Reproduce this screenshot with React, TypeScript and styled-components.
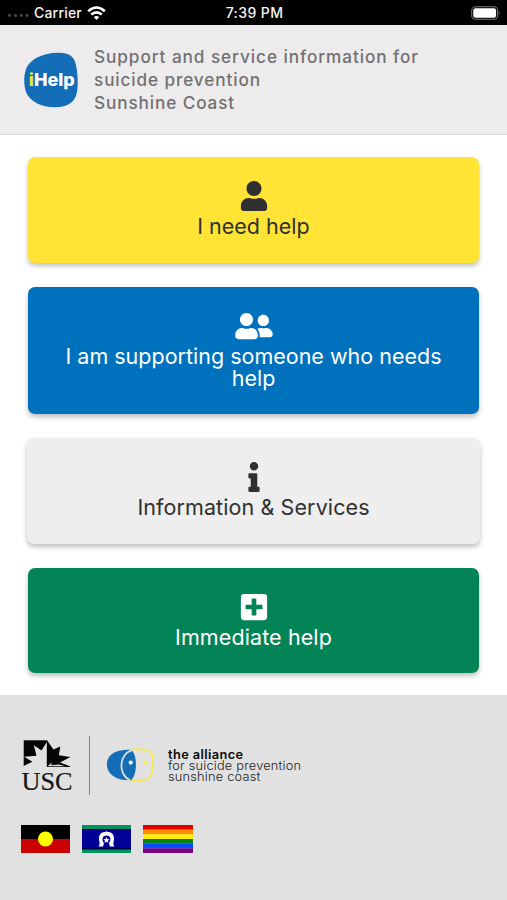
import React from "react";
import styled, { createGlobalStyle } from "styled-components";
import { FaUser, FaUserFriends, FaInfo, FaPlusSquare } from "react-icons/fa";

const GlobalStyle = createGlobalStyle`
  * { box-sizing: border-box; }
  body { margin: 0; background: #fff; font-family: Inter, sans-serif; }
`;

const Screen = styled.div`
  width: 507px;
  height: 900px;
  display: flex;
  flex-direction: column;
  overflow: hidden;
`;

const StatusBar = styled.div`
  height: 25px;
  flex: none;
  background: #000;
  color: #f4f4f4;
  display: grid;
  grid-template-columns: 1fr auto 1fr;
  align-items: center;
  padding: 1px 6px 0 8px;
  font: 500 14px/24px Inter, sans-serif;
`;

const Carrier = styled.div`
  display: flex;
  align-items: center;
  gap: 5px;
`;

const BatteryBox = styled.div`
  display: flex;
  justify-content: flex-end;
`;

const Header = styled.header`
  height: 110px;
  flex: none;
  background: #edebec;
  border-bottom: 1px solid #dcdbdc;
  display: flex;
  align-items: flex-start;
  padding: 20px 0 0 24px;
`;

const Logo = styled.svg`
  margin-top: 7px;
  flex: none;
`;

const Tagline = styled.div`
  margin-left: 15px;
  color: #727172;
  font-size: 17.2px;
  font-weight: 450;
  line-height: 23px;
`;

const Line = styled.div<{ $spacing: number }>`
  letter-spacing: ${(p) => p.$spacing}px;
  white-space: nowrap;
`;

const Menu = styled.main`
  flex: none;
  height: 560px;
  padding: 22px 28px 0;
  display: flex;
  flex-direction: column;
`;

const Card = styled.button<{ $bg: string; $fg: string; $height: number; $gap: number; $wide?: boolean }>`
  border: 0;
  border-radius: 7px;
  background: ${(p) => p.$bg};
  color: ${(p) => p.$fg};
  height: ${(p) => p.$height}px;
  flex: none;
  margin: 0 ${(p) => (p.$wide ? -1 : 0)}px ${(p) => p.$gap}px;
  padding: 24px 0 0;
  display: flex;
  flex-direction: column;
  align-items: center;
  font: 400 21.5px/22px Inter, sans-serif;
  box-shadow: 0 3px 5px rgba(0, 0, 0, 0.25);
  svg { height: 30px; width: 38px; display: block; margin-bottom: 4px; flex: none; }
`;

const Footer = styled.footer`
  flex: 1;
  background: #e1e1e1;
  padding: 41px 21px 0;
`;

const Partners = styled.div`
  display: flex;
  height: 59px;
`;

const Divider = styled.div`
  width: 1px;
  height: 59px;
  background: #858585;
  margin: 0 16px;
`;

const AllianceMark = styled.svg`
  margin-top: 11px;
`;

const AllianceText = styled.div`
  margin: 13px 0 0 14px;
  font: 300 12.8px/11px Inter, sans-serif;
  color: #222;
`;

const AllianceName = styled(Line)`
  font-weight: 600;
  color: #0a0a0a;
`;

const Flags = styled.div`
  display: flex;
  gap: 12px;
  margin-top: 30px;
`;

const rainbow = ["#e50000", "#ff8d00", "#ffee00", "#028121", "#064cff", "#770088"];

export default function App() {
  return (
    <Screen>
      <GlobalStyle />
      <StatusBar>
        <Carrier>
          <svg width="21" height="8" viewBox="0 0 21 8" fill="#4c4c4c">
            {[1.5, 7.5, 13.3, 19].map((x) => <circle key={x} cx={x} cy="6.5" r="1.4" />)}
          </svg>
          <Line as="span" $spacing={0.2}>Carrier</Line>
          <svg width="19" height="15" viewBox="0 0 19 15" fill="none" stroke="#fff" strokeWidth="2.6">
            <path d="M1.2 5.2 Q9.5 -2.2 17.8 5.2" />
            <path d="M4.2 8.6 Q9.5 4 14.8 8.6" />
            <path d="M6.7 11.1 Q9.5 8.8 12.3 11.1 L9.5 14 Z" fill="#fff" stroke="none" />
          </svg>
        </Carrier>
        <Line $spacing={0.4}>7:39 PM</Line>
        <BatteryBox>
          <svg width="30" height="14" viewBox="0 0 30 14">
            <rect x=".7" y=".7" width="26" height="12.6" rx="3.8" fill="none" stroke="#777" strokeWidth="1.1" />
            <rect x="2.3" y="2.2" width="22.8" height="9.6" rx="2.3" fill="#fff" />
            <path d="M28 5 Q29.5 7 28 9Z" fill="#777" />
          </svg>
        </BatteryBox>
      </StatusBar>

      <Header>
        <Logo width="55" height="56" viewBox="0 0 55 56">
          <path d="M33 .8 C45 .2 50 4 52 13 C54 22 54.2 34 52.8 41 C50.5 51 43 55 32 55.2 C18 55.5 6 50 2 40 C-1 31 -.2 18 5 12 C11 5 21 1.2 33 .8Z" fill="#136db7" />
          <text x="4.8" y="34" fontFamily="Inter, sans-serif" fontWeight="800" fontSize="17" fill="#fff" textLength="46" lengthAdjust="spacingAndGlyphs">
            <tspan fill="#e8e82e">i</tspan>Help
          </text>
        </Logo>
        <Tagline>
          <Line $spacing={0.93}>Support and service information for</Line>
          <Line $spacing={0.88}>suicide prevention</Line>
          <Line $spacing={0.88}>Sunshine Coast</Line>
        </Tagline>
      </Header>

      <Menu>
        <Card $bg="#ffe436" $fg="#303030" $height={106} $gap={24}>
          <FaUser />
          <Line $spacing={0}>I need help</Line>
        </Card>
        <Card $bg="#0071bd" $fg="#fff" $height={127} $gap={24}>
          <FaUserFriends />
          <Line $spacing={0}>I am supporting someone who needs</Line>
          <Line $spacing={0}>help</Line>
        </Card>
        <Card $bg="#eeeeee" $fg="#303030" $height={106} $gap={24} $wide>
          <FaInfo />
          <Line $spacing={0.1}>Information &amp; Services</Line>
        </Card>
        <Card $bg="#038457" $fg="#fff" $height={105} $gap={0}>
          <FaPlusSquare />
          <Line $spacing={0.1}>Immediate help</Line>
        </Card>
      </Menu>

      <Footer>
        <Partners>
          <svg width="52" height="59" viewBox="0 0 52 59">
            <path d="M2.7 4.3 H26 V31 H2.7Z" fill="#050505" />
            <path d="M26 4.3 L32.5 13.5 L39.3 10.5 L37.8 19.3 L49.5 21 L39 26.5 L49 30.2 V31 H26Z" fill="#050505" />
            <path d="M25.8 6 L20.5 14.5 L12.8 9.2 L15.5 19.8 L3 20.7 L11.5 25.7 L2.5 30 V31.2 H25.8 Z" fill="#e1e1e1" />
            <path d="M26.5 30.2 L31 26.5 L30 29.2 L38 28.5 L44 30.2Z" fill="#e1e1e1" />
            <text x=".5" y="53.5" fontFamily="Liberation Serif, serif" fontSize="26" fill="#151515" stroke="#151515" strokeWidth=".2" textLength="51" lengthAdjust="spacingAndGlyphs">USC</text>
          </svg>
          <Divider />
          <AllianceMark width="48" height="37" viewBox="0 0 48 37">
            <path d="M26 3 C31 1.5 41 2 44.5 5 C48 10 47.5 24 44.5 29 C41 34 31 34.5 24 33" fill="none" stroke="#f9e659" strokeWidth="2" />
            <path d="M25.5 2.8 C14 2 3 5 1 15 C-.5 26 9 34 25 33.3 C31.5 27 31.5 9 25.5 2.8Z" fill="#136db7" />
            <path d="M26.5 3.2 C13 6 11.5 28 24 33" fill="none" stroke="#e1e1e1" strokeWidth="1.8" />
            <circle cx="24.7" cy="15.6" r="2.1" fill="#fff" />
            <circle cx="39.5" cy="15.6" r="2.1" fill="#f9e659" />
          </AllianceMark>
          <AllianceText>
            <AllianceName $spacing={0.4}>the alliance</AllianceName>
            <Line $spacing={0.2}>for suicide prevention</Line>
            <Line $spacing={0.2}>sunshine coast</Line>
          </AllianceText>
        </Partners>
        <Flags>
          <svg width="49" height="28" viewBox="0 0 49 28">
            <path d="M0 0H49V14H0Z" fill="#000" />
            <path d="M0 14H49V28H0Z" fill="#c00" />
            <circle cx="24.5" cy="14" r="7.5" fill="#ff0" />
          </svg>
          <svg width="49" height="28" viewBox="0 0 49 28">
            <path d="M0 0H49V28H0Z" fill="#009460" />
            <path d="M0 4H49V24.5H0Z" fill="#000" />
            <path d="M0 5H49V23.5H0Z" fill="#000097" />
            <path d="M16.5 21.5 C18 20 17.8 18 17 15 C16.5 9 20 6.3 23.5 7 L24.5 6 L25.5 7 C29 6.3 32.5 9 32 15 C31.2 18 31 20 32.5 21.5 H28 L27 18.5 C30 14 28 10.5 24.5 10.5 C21 10.5 19 14 22 18.5 L21 21.5Z" fill="#fff" />
            <path d="M24.5 12 L25.4 14 L27.5 14.2 L26 15.7 L26.5 17.8 L24.5 16.8 L22.5 17.8 L23 15.7 L21.5 14.2 L23.6 14Z" fill="#fff" />
          </svg>
          <svg width="50" height="28" viewBox="0 0 50 28">
            {rainbow.map((color, i) => (
              <rect key={color} y={(i * 28) / 6} width="50" height={28 / 6 + 0.1} fill={color} />
            ))}
          </svg>
        </Flags>
      </Footer>
    </Screen>
  );
}
